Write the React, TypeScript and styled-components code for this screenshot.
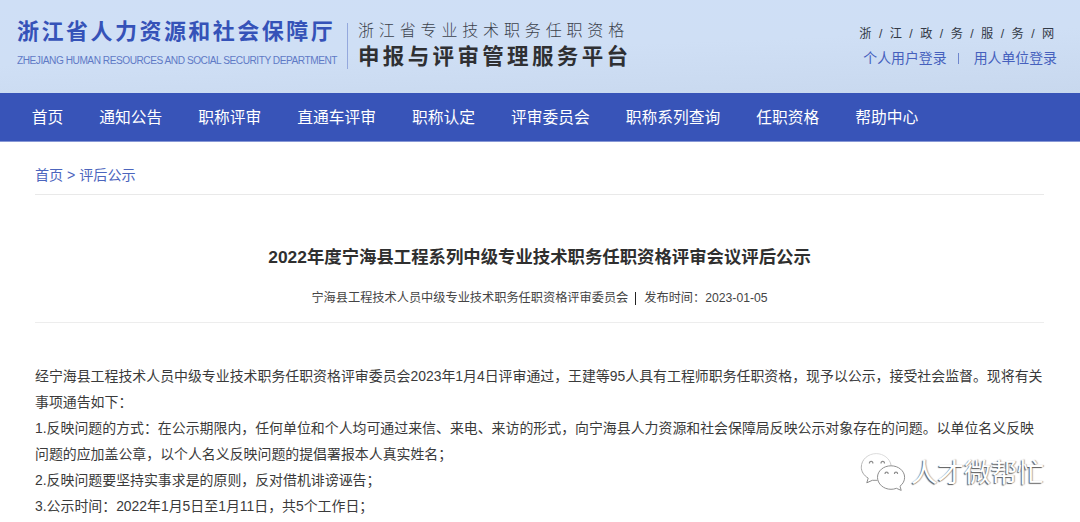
import React from "react";
import styled, { createGlobalStyle } from "styled-components";

const GlobalStyle = createGlobalStyle`
  * {
    box-sizing: border-box;
  }
  body {
    margin: 0;
    background-color: #fff;
    color: #3a3a3a;
    font-family: "Liberation Sans", "Noto Sans CJK SC", sans-serif;
    overflow: hidden;
  }
  a {
    color: inherit;
    text-decoration: none;
  }
  h1, p {
    margin: 0;
  }
`;

const Page = styled.div`
  position: relative;
  width: 1080px;
  height: 522px;
  overflow: hidden;
  white-space: nowrap;
`;

const Header = styled.header`
  display: flex;
  height: 93px;
  padding-left: 17px;
  background: linear-gradient(178deg, #cfdff6 0%, #cfdff5 50%, #c8d8ee 100%);
`;

const Department = styled.div`
  width: 330px;
  padding-top: 16px;
`;

const DepartmentName = styled.div`
  color: #3552b8;
  font-size: 22px;
  font-weight: 700;
  line-height: 32px;
  letter-spacing: 2.48px;
`;

const DepartmentEn = styled.div`
  margin-top: 3px;
  color: #5f7ac6;
  font-size: 11.7px;
  line-height: 17px;
  letter-spacing: -0.55px;
  transform: scaleX(0.868);
  transform-origin: left center;
`;

const Divider = styled.div`
  width: 1px;
  height: 46px;
  margin-top: 23px;
  background-color: #94a8dd;
`;

const Platform = styled.div`
  padding: 19px 0 0 10px;
`;

const PlatformTop = styled.div`
  color: #3c424c;
  font-size: 16px;
  font-weight: 300;
  line-height: 24px;
  letter-spacing: 4.85px;
`;

const PlatformName = styled.div`
  color: #2f3033;
  font-size: 21.5px;
  font-weight: 700;
  line-height: 29px;
  letter-spacing: 3.35px;
`;

const Account = styled.div`
  margin-left: auto;
  padding: 24px 23px 0 0;
`;

const Gov = styled.div`
  display: flex;
  justify-content: space-between;
  width: 195px;
  margin-left: -4px;
  color: #333a46;
  font-size: 12.2px;
  line-height: 20px;
`;

const Login = styled.div`
  display: flex;
  align-items: center;
  margin-top: 3px;
  color: #4560bd;
  font-size: 13.9px;
  line-height: 22px;
`;

const LoginBar = styled.span`
  width: 1px;
  height: 11px;
  margin: 0 15px 0 11px;
  background-color: #6f86cd;
`;

const Nav = styled.nav`
  display: flex;
  gap: 36px;
  height: 49px;
  padding-left: 31.7px;
  border-bottom: 1px solid #8797d5;
  background-color: #3854b8;
  color: #fff;
  font-size: 15.76px;
  line-height: 50px;
`;

const Content = styled.main`
  padding: 0 36px 0 35px;
`;

const Breadcrumb = styled.div`
  height: 53px;
  padding-top: 21px;
  border-bottom: 1px solid #e9e9e9;
  color: #4c65bd;
  font-size: 14.1px;
  line-height: 24px;
`;

const Heading = styled.div`
  height: 128px;
  padding-top: 48px;
  border-bottom: 1px solid #ededed;
  text-align: center;
`;

const Title = styled.h1`
  color: #2f2f2f;
  font-size: 17.39px;
  font-weight: 700;
  line-height: 28px;
`;

const Meta = styled.div`
  display: flex;
  align-items: center;
  justify-content: center;
  margin-top: 17px;
  color: #444;
  font-size: 12.19px;
  line-height: 20px;
`;

const MetaBar = styled.span`
  width: 1px;
  height: 13px;
  margin: 0 8px 0 7px;
  background-color: #222;
`;

const Article = styled.article`
  padding-top: 40px;
  font-size: 13.92px;
  line-height: 26px;
`;

const Watermark = styled.div`
  position: absolute;
  left: 860px;
  top: 451px;
  display: flex;
  align-items: flex-start;
  gap: 5px;
  color: #fff;
  font-size: 26.6px;
  font-weight: 400;
  line-height: 44px;
  text-shadow: -1px 1px 1px #5a5a5a, 1px 0 1px #aaa;
`;

const WechatIcon = () => (
  <svg width="46" height="42" viewBox="0 0 46 42" fill="#fff" strokeWidth="1">
    <defs>
      <linearGradient id="edge" x1="0.3" y1="0" x2="0.1" y2="1">
        <stop offset="0" stopColor="#dcdcdc" />
        <stop offset="1" stopColor="#858585" />
      </linearGradient>
    </defs>
    <path
      d="M17.5 29.3 L12.3 29.3 L6.8 31.8 L8.2 27.1 C3.8 24.5 1.3 20.4 1.3 16.2 C1.3 8.6 8.1 2.6 16.2 2.6 C23.7 2.6 30 7.8 31.1 14.3"
      stroke="url(#edge)"
    />
    <path
      d="M44.6 26.3 C44.6 19.9 38.5 14.8 31 14.8 C23.5 14.8 17.5 19.9 17.5 26.3 C17.5 32.9 23.5 38.3 31 38.3 C32.7 38.3 34.8 38 36.4 37.3 L41.2 39.4 L40 35.2 C43 32.9 44.6 29.8 44.6 26.3 Z"
      stroke="#8f8f8f"
    />
    <path
      d="M9.4 12.4 C9.4 9.7 12.9 9.7 12.9 12.4 M21 12.4 C21 9.7 24.5 9.7 24.5 12.4 M25 22.9 C25 20.4 28.2 20.4 28.2 22.9 M34.4 22.9 C34.4 20.4 37.6 20.4 37.6 22.9"
      fill="none"
      stroke="#8d8d8d"
      strokeWidth="1.2"
    />
  </svg>
);

const arrNav: string[] = [
  "首页",
  "通知公告",
  "职称评审",
  "直通车评审",
  "职称认定",
  "评审委员会",
  "职称系列查询",
  "任职资格",
  "帮助中心",
];

const arrText: string[] = [
  "经宁海县工程技术人员中级专业技术职务任职资格评审委员会2023年1月4日评审通过，王建等95人具有工程师职务任职资格，现予以公示，接受社会监督。现将有关",
  "事项通告如下：",
  "1.反映问题的方式：在公示期限内，任何单位和个人均可通过来信、来电、来访的形式，向宁海县人力资源和社会保障局反映公示对象存在的问题。以单位名义反映",
  "问题的应加盖公章，以个人名义反映问题的提倡署报本人真实姓名；",
  "2.反映问题要坚持实事求是的原则，反对借机诽谤诬告；",
  "3.公示时间：2022年1月5日至1月11日，共5个工作日；",
];

const App = () => {
  return (
    <>
      <GlobalStyle />
      <Page lang="zh-CN">
        <Header>
          <Department>
            <DepartmentName>浙江省人力资源和社会保障厅</DepartmentName>
            <DepartmentEn>
              ZHEJIANG HUMAN RESOURCES AND SOCIAL SECURITY DEPARTMENT
            </DepartmentEn>
          </Department>
          <Divider />
          <Platform>
            <PlatformTop>浙江省专业技术职务任职资格</PlatformTop>
            <PlatformName>申报与评审管理服务平台</PlatformName>
          </Platform>
          <Account>
            <Gov>
              {Array.from("浙/江/政/务/服/务/网").map((char, i) => (
                <span key={i}>{char}</span>
              ))}
            </Gov>
            <Login>
              <a href="#person">个人用户登录</a>
              <LoginBar />
              <a href="#company">用人单位登录</a>
            </Login>
          </Account>
        </Header>
        <Nav>
          {arrNav.map((name) => (
            <a key={name} href="#nav">
              {name}
            </a>
          ))}
        </Nav>
        <Content>
          <Breadcrumb>
            <a href="#home">首页</a> &gt; <a href="#list">评后公示</a>
          </Breadcrumb>
          <Heading>
            <Title>2022年度宁海县工程系列中级专业技术职务任职资格评审会议评后公示</Title>
            <Meta>
              <span>宁海县工程技术人员中级专业技术职务任职资格评审委员会</span>
              <MetaBar />
              <span>发布时间：2023-01-05</span>
            </Meta>
          </Heading>
          <Article>
            {arrText.map((text) => (
              <p key={text}>{text}</p>
            ))}
          </Article>
        </Content>
        <Watermark>
          <WechatIcon />
          <span>人才微帮忙</span>
        </Watermark>
      </Page>
    </>
  );
};

export default App;
